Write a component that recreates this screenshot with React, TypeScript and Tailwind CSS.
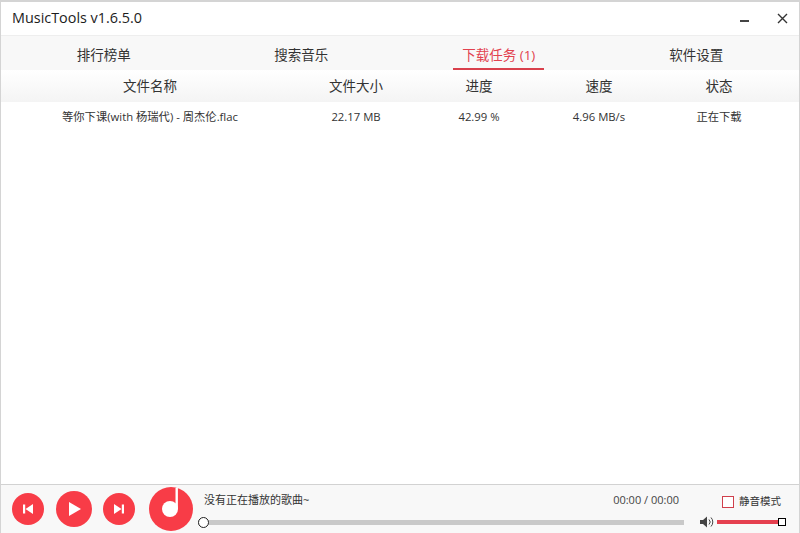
import React from "react"

const font = { cjk: "font-['Open_Sans','Noto_Sans_CJK_SC',sans-serif]" }

const tabs = [
  { name: "排行榜单" },
  { name: "搜索音乐" },
  { name: "下载任务 (1)", active: true },
  { name: "软件设置" },
]

const cols = ["文件名称", "文件大小", "进度", "速度", "状态"]
const row = ["等你下课(with 杨瑞代) - 周杰伦.flac", "22.17 MB", "42.99 %", "4.96 MB/s", "正在下载"]

function RoundButton({ size, children }: { size: string; children: React.ReactNode }) {
  return <button className={`${size} rounded-full bg-[#f83c47] flex items-center justify-center shrink-0`}>{children}</button>
}

export default function App() {
  return (
    <div className={`w-[800px] h-[533px] bg-white flex flex-col border-t-2 border-l border-r border-[#d4d4d4] text-[#222] overflow-hidden ${font.cjk}`}>
      <div className="h-[34px] flex items-center justify-between border-b border-[#eeeeee] shrink-0">
        <span className="ml-[11px] mb-[2px] text-[14.4px] text-[#1c1c1c]">MusicTools v1.6.5.0</span>
        <div className="flex items-center gap-[28px] mr-[11px]">
          <div className="w-[9px] h-[2px] mt-[4px] bg-[#444]" />
          <svg width="11" height="11" viewBox="0 0 11 11">
            <path d="M1 1 L10 10 M10 1 L1 10" stroke="#333" strokeWidth="1.4" fill="none" />
          </svg>
        </div>
      </div>

      <div className="h-[34px] grid grid-cols-4 px-[4px] bg-[#f8f8f8] shrink-0">
        {tabs.map((t) => (
          <div key={t.name} className="flex justify-center">
            <div className={`h-full px-[9px] flex items-center text-[13.5px] pt-[7px] border-b-2 ${t.active ? "text-[#e2424f] border-[#d9404c]" : "text-[#333] border-transparent"}`}>
              {t.name}
            </div>
          </div>
        ))}
      </div>

      <div className="h-[32px] pt-[1px] grid grid-cols-[298px_114px_132px_108px_132px] items-center bg-gradient-to-b from-white to-[#f4f4f4] text-[13.5px] text-[#333] shrink-0">
        {cols.map((c) => (
          <div key={c} className="text-center">{c}</div>
        ))}
      </div>

      <div className="h-[30px] pt-[1px] grid grid-cols-[298px_114px_132px_108px_132px] items-center text-[11.3px] text-[#333] shrink-0">
        {row.map((c) => (
          <div key={c} className="text-center">{c}</div>
        ))}
      </div>

      <div className="flex-1" />

      <div className="h-[49px] border-t border-[#d2d2d2] bg-[#f8f8f8] flex items-center shrink-0">
        <div className="flex items-center ml-[11px]">
          <RoundButton size="w-[32px] h-[32px]">
            <svg width="12" height="12" viewBox="0 0 12 12"><path d="M1 1.5h2.2v9H1z M11 1 v10 L3.5 6z" fill="#fff" /></svg>
          </RoundButton>
          <div className="ml-[12px]">
            <RoundButton size="w-[36px] h-[36px]">
              <svg width="14" height="16" viewBox="0 0 14 16" className="ml-[2px]"><path d="M1 1 L13 8 L1 15z" fill="#fff" /></svg>
            </RoundButton>
          </div>
          <div className="ml-[11px]">
            <RoundButton size="w-[32px] h-[32px]">
              <svg width="12" height="12" viewBox="0 0 12 12"><path d="M11 1.5H8.8v9H11z M1 1 v10 L8.5 6z" fill="#fff" /></svg>
            </RoundButton>
          </div>
          <div className="ml-[14px]">
            <RoundButton size="w-[44px] h-[44px]">
              <svg width="44" height="44" viewBox="0 0 44 44">
                <circle cx="21" cy="22" r="8" fill="#fff" />
                <path d="M26.5 1 h2.4 v21 h-2.4z" fill="#fff" />
              </svg>
            </RoundButton>
          </div>
        </div>

        <div className="flex-1 ml-[5px] flex flex-col h-full pt-[7px]">
          <div className="flex justify-between text-[11px] text-[#333] pl-[6px] pr-[5px] h-[17px] items-center">
            <span>没有正在播放的歌曲~</span>
            <span className="text-[#444]">00:00 / 00:00</span>
          </div>
          <div className="h-[5px] mt-[11px] bg-[#c9c9c9] relative">
            <div className="absolute left-0 top-[-3px] w-[11px] h-[11px] rounded-full bg-white border border-[#222]" />
          </div>
        </div>

        <div className="w-[99px] ml-[16px] flex flex-col h-full pt-[9px] shrink-0">
          <div className="flex items-center justify-end pr-[18px] h-[16px]">
            <div className="w-[12px] h-[12px] border border-[#d0404c] bg-white" />
            <span className="ml-[5px] text-[10.5px] text-[#333]">静音模式</span>
          </div>
          <div className="flex items-center mt-[6px]">
            <svg width="14" height="12" viewBox="0 0 14 12">
              <path d="M0 4h3l4-3.5v11L3 8H0z" fill="#444" />
              <path d="M9 3.5a3.5 3.5 0 0 1 0 5M11 1.5a6.5 6.5 0 0 1 0 9" stroke="#444" strokeWidth="1" fill="none" />
            </svg>
            <div className="relative ml-[3px] w-[63px] h-[4px] bg-[#e5404f]">
              <div className="absolute right-[-6px] top-[-2px] w-[8px] h-[8px] bg-white border border-black" />
            </div>
          </div>
        </div>
      </div>
    </div>
  )
}
